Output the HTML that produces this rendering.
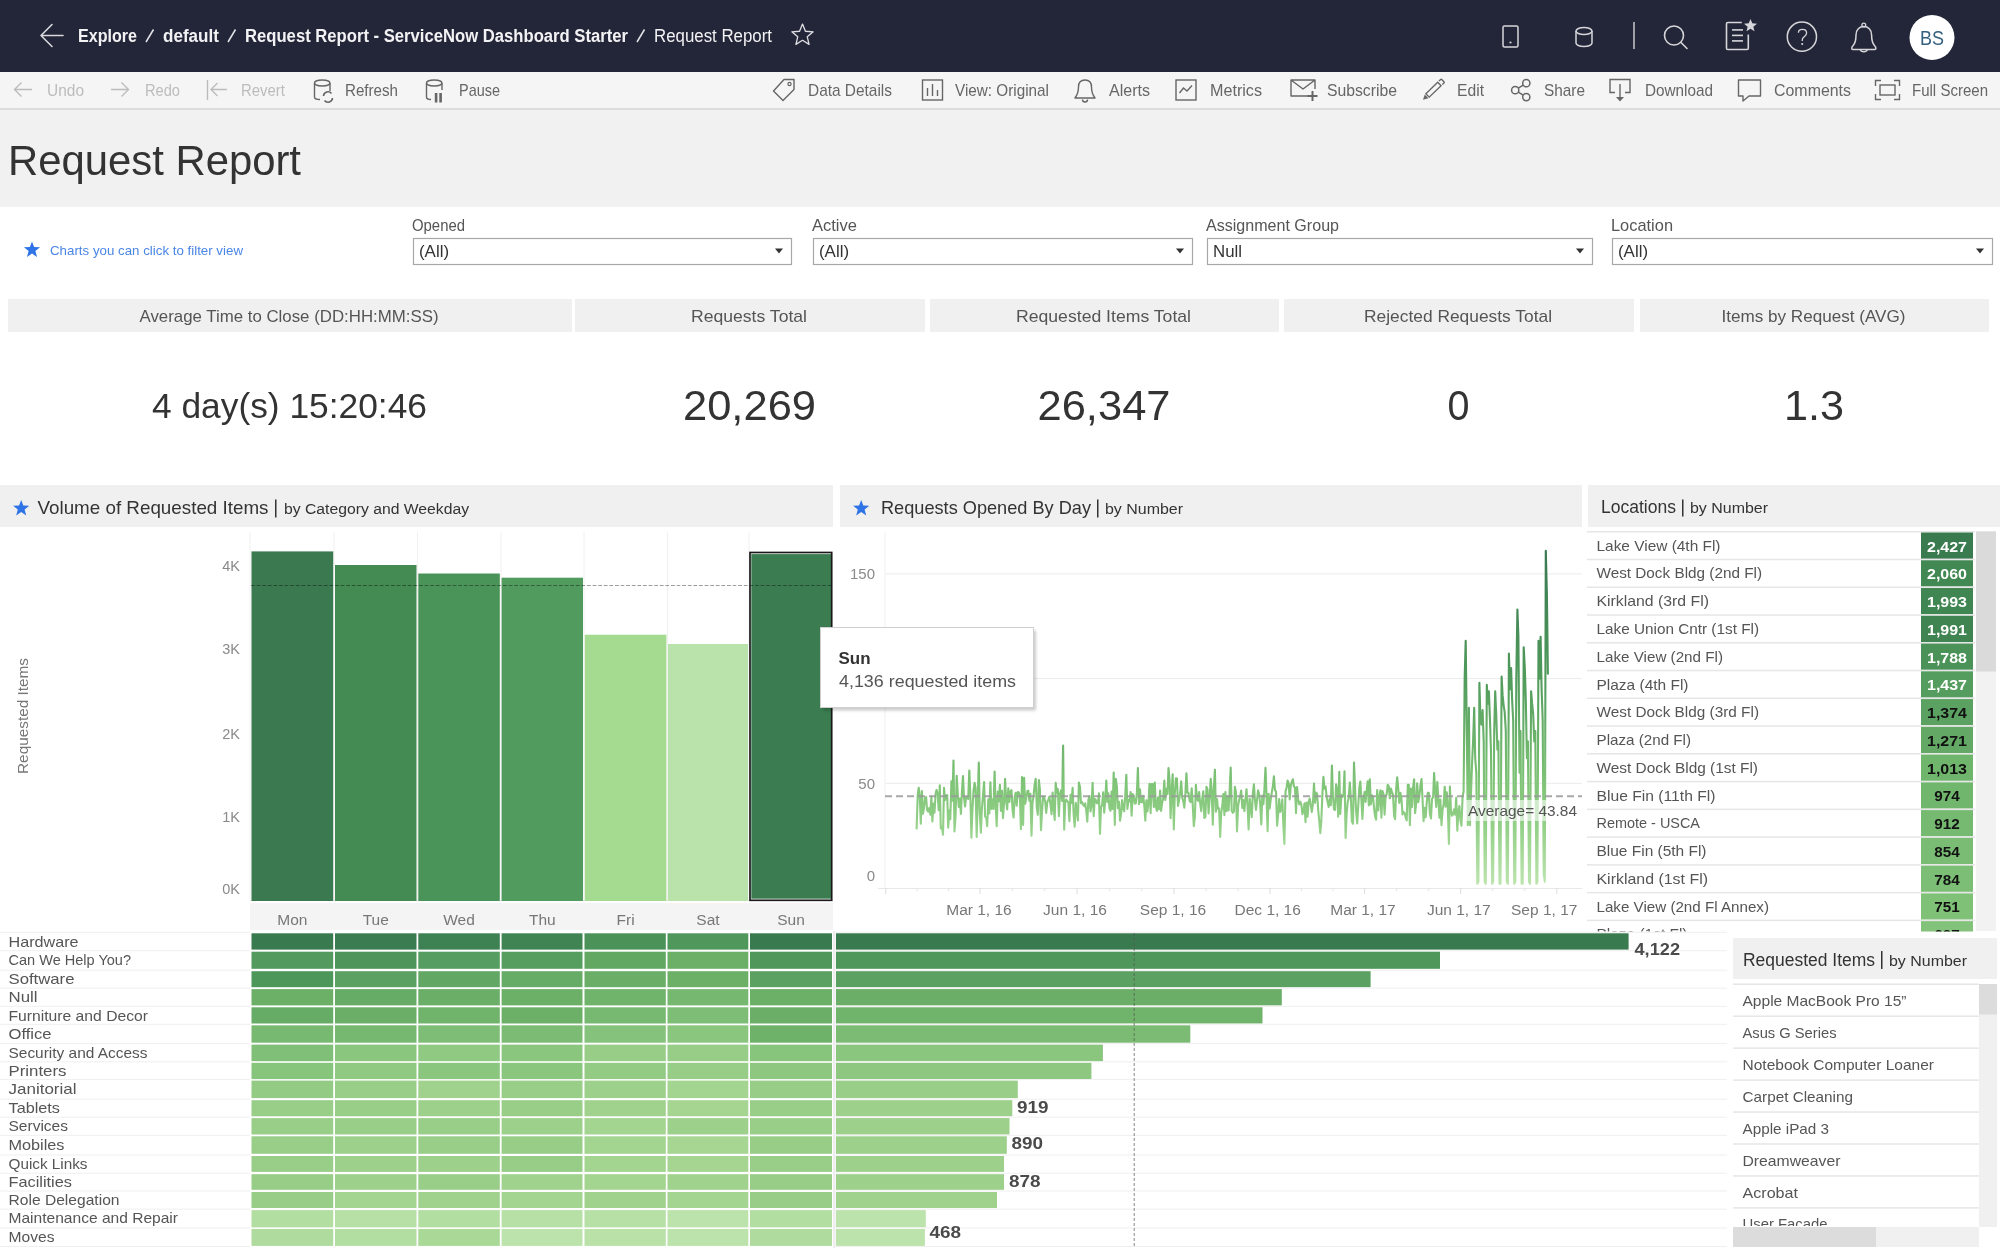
<!DOCTYPE html>
<html><head><meta charset="utf-8"><title>Request Report</title>
<style>
html,body{margin:0;padding:0;width:2000px;height:1250px;overflow:hidden;background:#fff}
svg{display:block;font-family:"Liberation Sans",sans-serif;will-change:transform}
</style></head><body>
<svg width="2000" height="1250" viewBox="0 0 2000 1250">
<rect x="0" y="0" width="2000" height="72" fill="#232638" />
<path d="M63 35.5 H41 M52 24.5 L41 35.5 L52 46.5" fill="none" stroke="#d8d8dc" stroke-width="1.6" stroke-linecap="round" stroke-linejoin="round"/>
<text x="78" y="42" font-size="18" fill="#f2f2f4" font-weight="bold" textLength="59" lengthAdjust="spacingAndGlyphs" >Explore</text>
<line x1="146" y1="42" x2="153.5" y2="29.5" stroke="#e4e4e8" stroke-width="1.5" />
<text x="163" y="42" font-size="18" fill="#f2f2f4" font-weight="bold" textLength="56" lengthAdjust="spacingAndGlyphs" >default</text>
<line x1="228" y1="42" x2="235.5" y2="29.5" stroke="#e4e4e8" stroke-width="1.5" />
<text x="245" y="42" font-size="18" fill="#f2f2f4" font-weight="bold" textLength="383" lengthAdjust="spacingAndGlyphs" >Request Report - ServiceNow Dashboard Starter</text>
<line x1="637" y1="42" x2="644.5" y2="29.5" stroke="#e4e4e8" stroke-width="1.5" />
<text x="654" y="42" font-size="18" fill="#f2f2f4" textLength="118" lengthAdjust="spacingAndGlyphs" >Request Report</text>
<path d="M802.50,24.10 L805.44,31.25 L813.15,31.84 L807.26,36.85 L809.08,44.36 L802.50,40.30 L795.92,44.36 L797.74,36.85 L791.85,31.84 L799.56,31.25 Z" fill="none" stroke="#e0e0e4" stroke-width="1.3" stroke-linejoin="round"/>
<rect x="1503" y="26" width="15" height="21" rx="1.5" fill="none" stroke="#d6d6da" stroke-width="1.5"/>
<circle cx="1510.5" cy="42.5" r="1.1" fill="#d6d6da"/>
<path d="M1576 31 V43 A8 3.6 0 0 0 1592 43 V31" fill="none" stroke="#d6d6da" stroke-width="1.5"/>
<ellipse cx="1584" cy="31" rx="8" ry="3.6" fill="none" stroke="#d6d6da" stroke-width="1.5"/>
<line x1="1634" y1="22" x2="1634" y2="49" stroke="#c8c8cc" stroke-width="1.5" />
<circle cx="1674" cy="35.5" r="9.5" fill="none" stroke="#d6d6da" stroke-width="1.6"/>
<line x1="1681" y1="42.5" x2="1687" y2="48.5" stroke="#d6d6da" stroke-width="1.6" stroke-linecap="round"/>
<path d="M1741.8 22.5 H1727.8 Q1726.5 22.5 1726.5 23.8 V48.2 Q1726.5 49.5 1727.8 49.5 H1747 Q1748.3 49.5 1748.3 48.2 V34.5" fill="none" stroke="#d6d6da" stroke-width="1.6"/>
<line x1="1732" y1="29.9" x2="1743" y2="29.9" stroke="#d6d6da" stroke-width="1.6" />
<line x1="1732" y1="35.4" x2="1743" y2="35.4" stroke="#d6d6da" stroke-width="1.6" />
<line x1="1732" y1="40.9" x2="1743" y2="40.9" stroke="#d6d6da" stroke-width="1.6" />
<path d="M1750.50,19.00 L1752.26,23.37 L1756.97,23.70 L1753.35,26.73 L1754.50,31.30 L1750.50,28.80 L1746.50,31.30 L1747.65,26.73 L1744.03,23.70 L1748.74,23.37 Z" fill="#d6d6da"/>
<circle cx="1801.9" cy="36.7" r="14.6" fill="none" stroke="#d6d6da" stroke-width="1.5"/>
<path d="M1798.4 32.8 C1798.4 30.6 1800 29.4 1802.4 29.4 C1804.9 29.4 1806.6 31 1806.6 33.1 C1806.6 35.5 1804.6 36.3 1803.3 37.5 C1802.4 38.3 1802.2 39.2 1802.2 41" fill="none" stroke="#d6d6da" stroke-width="1.3"/>
<circle cx="1802.2" cy="44" r="1.05" fill="#d6d6da"/>
<path d="M1851.7 48.3 Q1851.7 47 1853 45.7 C1855.6 43 1856 40 1856 35 C1856 29.6 1859.5 26.6 1863.8 26.6 C1868.1 26.6 1871.6 29.6 1871.6 35 C1871.6 40 1872 43 1874.6 45.7 Q1875.9 47 1875.9 48.3 Q1875.9 49.4 1874.8 49.4 H1852.8 Q1851.7 49.4 1851.7 48.3 Z" fill="none" stroke="#d6d6da" stroke-width="1.5" stroke-linejoin="round"/>
<circle cx="1863.8" cy="25" r="1.9" fill="none" stroke="#d6d6da" stroke-width="1.3"/>
<path d="M1860.3 49.6 A3.6 2.8 0 0 0 1867.3 49.6" fill="none" stroke="#d6d6da" stroke-width="1.5"/>
<circle cx="1932" cy="37.5" r="22.5" fill="#ffffff"/>
<text x="1920" y="45" font-size="21" fill="#34607f" textLength="24" lengthAdjust="spacingAndGlyphs" >BS</text>
<rect x="0" y="72" width="2000" height="36" fill="#f5f5f5" />
<rect x="0" y="108" width="2000" height="2" fill="#dcdcdc" />
<path d="M32 89.5 H14.5 M21.5 82.5 L14.5 89.5 L21.5 96.5" fill="none" stroke="#bcbcbc" stroke-width="1.4"/>
<text x="47" y="96" font-size="17" fill="#bcbcbc" textLength="37" lengthAdjust="spacingAndGlyphs" >Undo</text>
<path d="M111 89.5 H128.5 M121.5 82.5 L128.5 89.5 L121.5 96.5" fill="none" stroke="#bcbcbc" stroke-width="1.4"/>
<text x="145" y="96" font-size="17" fill="#bcbcbc" textLength="35" lengthAdjust="spacingAndGlyphs" >Redo</text>
<path d="M207.5 80 V100 M227 89.5 H211 M217.5 83 L211 89.5 L217.5 96" fill="none" stroke="#bcbcbc" stroke-width="1.4"/>
<text x="241" y="96" font-size="17" fill="#bcbcbc" textLength="44" lengthAdjust="spacingAndGlyphs" >Revert</text>
<path d="M314.5 83 V97 Q314.5 99.5 320 99.5 M330 83 V91" fill="none" stroke="#666666" stroke-width="1.4"/>
<ellipse cx="322.2" cy="83" rx="7.7" ry="3" fill="none" stroke="#666666" stroke-width="1.4"/>
<path d="M323.5 96 A4.5 4.5 0 0 1 331.5 93.5 M332.5 98 A4.5 4.5 0 0 1 324.5 100.5" fill="none" stroke="#666666" stroke-width="1.6"/>
<text x="345" y="96" font-size="17" fill="#666666" textLength="53" lengthAdjust="spacingAndGlyphs" >Refresh</text>
<path d="M426.5 83 V97 Q426.5 99.5 431 99.5 M442 83 V90" fill="none" stroke="#666666" stroke-width="1.4"/>
<ellipse cx="434.2" cy="83" rx="7.7" ry="3" fill="none" stroke="#666666" stroke-width="1.4"/>
<rect x="434.8" y="93" width="2.6" height="9.5" fill="#666666" />
<rect x="439.3" y="93" width="2.6" height="9.5" fill="#666666" />
<text x="459" y="96" font-size="17" fill="#666666" textLength="41" lengthAdjust="spacingAndGlyphs" >Pause</text>
<path d="M784 79.5 H794 V89.5 L783 100.5 L773.5 91 Z" fill="none" stroke="#666666" stroke-width="1.4" stroke-linejoin="round" transform="rotate(0)"/>
<circle cx="789.5" cy="84" r="1.6" fill="none" stroke="#666666" stroke-width="1.2"/>
<text x="808" y="96" font-size="17" fill="#666666" textLength="84" lengthAdjust="spacingAndGlyphs" >Data Details</text>
<rect x="922.5" y="80" width="20" height="20" fill="none" stroke="#666666" stroke-width="1.4"/>
<line x1="927.5" y1="88" x2="927.5" y2="96" stroke="#666666" stroke-width="1.4" />
<line x1="932.5" y1="84" x2="932.5" y2="96" stroke="#666666" stroke-width="1.4" />
<line x1="937.5" y1="90" x2="937.5" y2="96" stroke="#666666" stroke-width="1.4" />
<text x="955" y="96" font-size="17" fill="#666666" textLength="94" lengthAdjust="spacingAndGlyphs" >View: Original</text>
<path d="M1075 98 H1095 C1092 94 1091.5 91 1091.5 87 C1091.5 82 1088.5 80 1085 80 C1081.5 80 1078.5 82 1078.5 87 C1078.5 91 1078 94 1075 98 Z" fill="none" stroke="#666666" stroke-width="1.4" stroke-linejoin="round"/>
<path d="M1082.5 99.5 A2.5 2.5 0 0 0 1087.5 99.5" fill="none" stroke="#666666" stroke-width="1.4"/>
<text x="1109" y="96" font-size="17" fill="#666666" textLength="41" lengthAdjust="spacingAndGlyphs" >Alerts</text>
<rect x="1176" y="80" width="20" height="20" fill="none" stroke="#666666" stroke-width="1.4"/>
<path d="M1179.5 93 L1183.5 88 L1187 91 L1192 85.5" fill="none" stroke="#666666" stroke-width="1.4"/>
<text x="1210" y="96" font-size="17" fill="#666666" textLength="52" lengthAdjust="spacingAndGlyphs" >Metrics</text>
<path d="M1310 96 H1291 V80 H1315 V89 M1291 80 L1303 89 L1315 80" fill="none" stroke="#666666" stroke-width="1.4" stroke-linejoin="round"/>
<line x1="1312.5" y1="91" x2="1312.5" y2="101" stroke="#666666" stroke-width="2" />
<line x1="1307.5" y1="96" x2="1317.5" y2="96" stroke="#666666" stroke-width="2" />
<text x="1327" y="96" font-size="17" fill="#666666" textLength="70" lengthAdjust="spacingAndGlyphs" >Subscribe</text>
<g transform="translate(1423,99.8) rotate(-44)"><path d="M0 0 L5 -2.7 L5 2.7 Z" fill="#666666"/><rect x="6.3" y="-2.4" width="16.5" height="4.8" fill="none" stroke="#666666" stroke-width="1.35"/><path d="M24.6 -2.4 H26.8 Q27.6 -2.4 27.6 -1.6 V1.6 Q27.6 2.4 26.8 2.4 H24.6" fill="none" stroke="#666666" stroke-width="1.35"/></g>
<text x="1457" y="96" font-size="17" fill="#666666" textLength="27" lengthAdjust="spacingAndGlyphs" >Edit</text>
<circle cx="1515.2" cy="90.2" r="3.6" fill="none" stroke="#666666" stroke-width="1.5"/>
<circle cx="1526.3" cy="83.2" r="3.6" fill="none" stroke="#666666" stroke-width="1.5"/>
<circle cx="1526.3" cy="97.1" r="3.6" fill="none" stroke="#666666" stroke-width="1.5"/>
<path d="M1518.3 88.2 L1523.2 85.1 M1518.3 92.2 L1523.2 95.2" fill="none" stroke="#666666" stroke-width="1.5"/>
<text x="1544" y="96" font-size="17" fill="#666666" textLength="41" lengthAdjust="spacingAndGlyphs" >Share</text>
<path d="M1615 92.5 H1610 V79.5 H1630 V92.5 H1625" fill="none" stroke="#666666" stroke-width="1.4"/>
<line x1="1620" y1="84" x2="1620" y2="98" stroke="#666666" stroke-width="1.4" />
<path d="M1616 97 L1620 101.5 L1624 97 Z" fill="#666666"/>
<text x="1645" y="96" font-size="17" fill="#666666" textLength="68" lengthAdjust="spacingAndGlyphs" >Download</text>
<path d="M1738.5 80 H1760.5 V96 H1749 L1743 101 V96 H1738.5 Z" fill="none" stroke="#666666" stroke-width="1.4" stroke-linejoin="round"/>
<text x="1774" y="96" font-size="17" fill="#666666" textLength="77" lengthAdjust="spacingAndGlyphs" >Comments</text>
<path d="M1875.5 86 V80.5 H1881 M1894 80.5 H1899.5 V86 M1899.5 94 V99.5 H1894 M1881 99.5 H1875.5 V94" fill="none" stroke="#666666" stroke-width="1.4"/>
<rect x="1880" y="85" width="15" height="10" fill="none" stroke="#666666" stroke-width="1.4"/>
<text x="1912" y="96" font-size="17" fill="#666666" textLength="76" lengthAdjust="spacingAndGlyphs" >Full Screen</text>
<rect x="0" y="110" width="2000" height="97" fill="#f1f1f1" />
<text x="8" y="175.3" font-size="42" fill="#333333" textLength="293" lengthAdjust="spacingAndGlyphs" >Request Report</text>
<rect x="0" y="207" width="2000" height="1043" fill="#ffffff" />
<path d="M32.00,241.50 L34.12,247.09 L40.08,247.37 L35.42,251.11 L37.00,256.88 L32.00,253.60 L27.00,256.88 L28.58,251.11 L23.92,247.37 L29.88,247.09 Z" fill="#2e74e6"/>
<text x="50" y="255.2" font-size="13.5" fill="#4a86e6" textLength="193" lengthAdjust="spacingAndGlyphs" >Charts you can click to filter view</text>
<text x="412" y="231" font-size="16.2" fill="#555555" textLength="53" lengthAdjust="spacingAndGlyphs" >Opened</text>
<rect x="413.5" y="238.5" width="378" height="26" fill="#ffffff" stroke="#a8a8a8" stroke-width="1.2"/>
<text x="419" y="257" font-size="16" fill="#333333" textLength="30" lengthAdjust="spacingAndGlyphs" >(All)</text>
<path d="M775 248.5 H783 L779 253.5 Z" fill="#333333"/>
<text x="812" y="231" font-size="16.2" fill="#555555" textLength="45" lengthAdjust="spacingAndGlyphs" >Active</text>
<rect x="813.5" y="238.5" width="379" height="26" fill="#ffffff" stroke="#a8a8a8" stroke-width="1.2"/>
<text x="819" y="257" font-size="16" fill="#333333" textLength="30" lengthAdjust="spacingAndGlyphs" >(All)</text>
<path d="M1176 248.5 H1184 L1180 253.5 Z" fill="#333333"/>
<text x="1206" y="231" font-size="16.2" fill="#555555" textLength="133" lengthAdjust="spacingAndGlyphs" >Assignment Group</text>
<rect x="1207.5" y="238.5" width="385" height="26" fill="#ffffff" stroke="#a8a8a8" stroke-width="1.2"/>
<text x="1213" y="257" font-size="16" fill="#333333" textLength="29" lengthAdjust="spacingAndGlyphs" >Null</text>
<path d="M1576 248.5 H1584 L1580 253.5 Z" fill="#333333"/>
<text x="1611" y="231" font-size="16.2" fill="#555555" textLength="62" lengthAdjust="spacingAndGlyphs" >Location</text>
<rect x="1612.5" y="238.5" width="380" height="26" fill="#ffffff" stroke="#a8a8a8" stroke-width="1.2"/>
<text x="1618" y="257" font-size="16" fill="#333333" textLength="30" lengthAdjust="spacingAndGlyphs" >(All)</text>
<path d="M1976 248.5 H1984 L1980 253.5 Z" fill="#333333"/>
<rect x="8" y="299" width="564" height="33" fill="#f0f0f0" />
<text x="139.5" y="322" font-size="17" fill="#555555" textLength="299" lengthAdjust="spacingAndGlyphs" >Average Time to Close (DD:HH:MM:SS)</text>
<text x="152" y="418.2" font-size="34.5" fill="#333333" textLength="275" lengthAdjust="spacingAndGlyphs" >4 day(s) 15:20:46</text>
<rect x="575" y="299" width="350" height="33" fill="#f0f0f0" />
<text x="691.0" y="322" font-size="17" fill="#555555" textLength="116" lengthAdjust="spacingAndGlyphs" >Requests Total</text>
<text x="683.0" y="420" font-size="42.5" fill="#333333" textLength="133" lengthAdjust="spacingAndGlyphs" >20,269</text>
<rect x="930" y="299" width="349" height="33" fill="#f0f0f0" />
<text x="1016.0" y="322" font-size="17" fill="#555555" textLength="175" lengthAdjust="spacingAndGlyphs" >Requested Items Total</text>
<text x="1037.5" y="420" font-size="42.5" fill="#333333" textLength="133" lengthAdjust="spacingAndGlyphs" >26,347</text>
<rect x="1284" y="299" width="350" height="33" fill="#f0f0f0" />
<text x="1364.0" y="322" font-size="17" fill="#555555" textLength="188" lengthAdjust="spacingAndGlyphs" >Rejected Requests Total</text>
<text x="1447.5" y="420" font-size="42.5" fill="#333333" textLength="22" lengthAdjust="spacingAndGlyphs" >0</text>
<rect x="1640" y="299" width="349" height="33" fill="#f0f0f0" />
<text x="1721.5" y="322" font-size="17" fill="#555555" textLength="184" lengthAdjust="spacingAndGlyphs" >Items by Request (AVG)</text>
<text x="1784.0" y="420" font-size="42.5" fill="#333333" textLength="60" lengthAdjust="spacingAndGlyphs" >1.3</text>
<rect x="0" y="485" width="833" height="42" fill="#f0f0f0" />
<rect x="840" y="485" width="742" height="42" fill="#f0f0f0" />
<rect x="1588" y="485" width="412" height="42" fill="#f0f0f0" />
<path d="M21.20,500.00 L23.32,505.59 L29.28,505.87 L24.62,509.61 L26.20,515.38 L21.20,512.10 L16.20,515.38 L17.78,509.61 L13.12,505.87 L19.08,505.59 Z" fill="#2e74e6"/>
<text x="37.5" y="514" font-size="18.5" fill="#333333" textLength="231" lengthAdjust="spacingAndGlyphs" >Volume of Requested Items</text>
<rect x="275" y="499.5" width="1.5" height="18" fill="#333333" />
<text x="284" y="514" font-size="15.5" fill="#333333" textLength="185" lengthAdjust="spacingAndGlyphs" >by Category and Weekday</text>
<path d="M861.20,500.00 L863.32,505.59 L869.28,505.87 L864.62,509.61 L866.20,515.38 L861.20,512.10 L856.20,515.38 L857.78,509.61 L853.12,505.87 L859.08,505.59 Z" fill="#2e74e6"/>
<text x="881" y="514" font-size="18.5" fill="#333333" textLength="210" lengthAdjust="spacingAndGlyphs" >Requests Opened By Day</text>
<rect x="1097" y="499.5" width="1.5" height="18" fill="#333333" />
<text x="1105" y="514" font-size="15.5" fill="#333333" textLength="78" lengthAdjust="spacingAndGlyphs" >by Number</text>
<text x="1601" y="513" font-size="17.5" fill="#333333" textLength="75" lengthAdjust="spacingAndGlyphs" >Locations</text>
<rect x="1682" y="499.5" width="1.5" height="17" fill="#333333" />
<text x="1690" y="513" font-size="15.5" fill="#333333" textLength="78" lengthAdjust="spacingAndGlyphs" >by Number</text>
<line x1="250" y1="532" x2="250" y2="900" stroke="#f0f0f0" stroke-width="1" />
<line x1="334" y1="532" x2="334" y2="900" stroke="#f0f0f0" stroke-width="1" />
<line x1="417.5" y1="532" x2="417.5" y2="900" stroke="#f0f0f0" stroke-width="1" />
<line x1="501" y1="532" x2="501" y2="900" stroke="#f0f0f0" stroke-width="1" />
<line x1="584" y1="532" x2="584" y2="900" stroke="#f0f0f0" stroke-width="1" />
<line x1="667.5" y1="532" x2="667.5" y2="900" stroke="#f0f0f0" stroke-width="1" />
<line x1="749" y1="532" x2="749" y2="900" stroke="#f0f0f0" stroke-width="1" />
<rect x="250" y="900" width="583" height="1" fill="#e8e8e8" />
<rect x="251.5" y="551.4" width="81.69999999999999" height="349.6" fill="#3b7a50" />
<rect x="335" y="565" width="81.5" height="336" fill="#438a53" />
<rect x="418.3" y="573.5" width="81.5" height="327.5" fill="#4b9459" />
<rect x="501.6" y="577.7" width="81.39999999999998" height="323.29999999999995" fill="#529b5e" />
<rect x="584.8" y="634.7" width="81.60000000000002" height="266.29999999999995" fill="#a5da91" />
<rect x="668" y="644" width="80" height="257" fill="#b9e3aa" />
<rect x="751.3" y="554.1" width="79.9" height="344.59999999999997" fill="#3b7d50" />
<rect x="750" y="552.5" width="81.7" height="347.8" fill="none" stroke="#1a1a1a" stroke-width="1.7"/>
<line x1="251" y1="585.5" x2="833" y2="585.5" stroke="#000000" stroke-width="1.1" stroke-dasharray="3.8 1.8" opacity="0.38"/>
<text x="240" y="570.5" font-size="14.5" fill="#8a8a8a" text-anchor="end" >4K</text>
<text x="240" y="654" font-size="14.5" fill="#8a8a8a" text-anchor="end" >3K</text>
<text x="240" y="738.5" font-size="14.5" fill="#8a8a8a" text-anchor="end" >2K</text>
<text x="240" y="822" font-size="14.5" fill="#8a8a8a" text-anchor="end" >1K</text>
<text x="240" y="894" font-size="14.5" fill="#8a8a8a" text-anchor="end" >0K</text>
<text x="0" y="0" font-size="15" fill="#777777" transform="translate(28,716) rotate(-90)" text-anchor="middle" textLength="116" lengthAdjust="spacingAndGlyphs">Requested Items</text>
<rect x="250" y="903" width="583" height="27" fill="#f4f4f4" />
<text x="292.35" y="925" font-size="15.5" fill="#777777" text-anchor="middle" >Mon</text>
<text x="375.75" y="925" font-size="15.5" fill="#777777" text-anchor="middle" >Tue</text>
<text x="459.05" y="925" font-size="15.5" fill="#777777" text-anchor="middle" >Wed</text>
<text x="542.3" y="925" font-size="15.5" fill="#777777" text-anchor="middle" >Thu</text>
<text x="625.5999999999999" y="925" font-size="15.5" fill="#777777" text-anchor="middle" >Fri</text>
<text x="708.0" y="925" font-size="15.5" fill="#777777" text-anchor="middle" >Sat</text>
<text x="791.0" y="925" font-size="15.5" fill="#777777" text-anchor="middle" >Sun</text>
<line x1="885" y1="573.9000000000001" x2="1582" y2="573.9000000000001" stroke="#ececec" stroke-width="1" />
<line x1="885" y1="678.6" x2="1582" y2="678.6" stroke="#ececec" stroke-width="1" />
<line x1="885" y1="783.3" x2="1582" y2="783.3" stroke="#ececec" stroke-width="1" />
<line x1="885" y1="532" x2="885" y2="888" stroke="#f0f0f0" stroke-width="1" />
<line x1="878" y1="888.5" x2="1582" y2="888.5" stroke="#e8e8e8" stroke-width="1" />
<text x="875" y="579.4000000000001" font-size="15" fill="#8a8a8a" text-anchor="end" >150</text>
<text x="875" y="788.8" font-size="15" fill="#8a8a8a" text-anchor="end" >50</text>
<text x="875" y="880.5" font-size="15" fill="#8a8a8a" text-anchor="end" >0</text>
<line x1="885.8" y1="888" x2="885.8" y2="894" stroke="#dddddd" stroke-width="1" />
<line x1="980" y1="888" x2="980" y2="894" stroke="#dddddd" stroke-width="1" />
<line x1="1077" y1="888" x2="1077" y2="894" stroke="#dddddd" stroke-width="1" />
<line x1="1174" y1="888" x2="1174" y2="894" stroke="#dddddd" stroke-width="1" />
<line x1="1270" y1="888" x2="1270" y2="894" stroke="#dddddd" stroke-width="1" />
<line x1="1364.6" y1="888" x2="1364.6" y2="894" stroke="#dddddd" stroke-width="1" />
<line x1="1460.7" y1="888" x2="1460.7" y2="894" stroke="#dddddd" stroke-width="1" />
<line x1="1556.8" y1="888" x2="1556.8" y2="894" stroke="#dddddd" stroke-width="1" />
<line x1="917.1999999999999" y1="888" x2="917.1999999999999" y2="891" stroke="#e6e6e6" stroke-width="1" />
<line x1="948.6" y1="888" x2="948.6" y2="891" stroke="#e6e6e6" stroke-width="1" />
<line x1="1012.3333333333334" y1="888" x2="1012.3333333333334" y2="891" stroke="#e6e6e6" stroke-width="1" />
<line x1="1044.6666666666667" y1="888" x2="1044.6666666666667" y2="891" stroke="#e6e6e6" stroke-width="1" />
<line x1="1109.3333333333333" y1="888" x2="1109.3333333333333" y2="891" stroke="#e6e6e6" stroke-width="1" />
<line x1="1141.6666666666667" y1="888" x2="1141.6666666666667" y2="891" stroke="#e6e6e6" stroke-width="1" />
<line x1="1206.0" y1="888" x2="1206.0" y2="891" stroke="#e6e6e6" stroke-width="1" />
<line x1="1238.0" y1="888" x2="1238.0" y2="891" stroke="#e6e6e6" stroke-width="1" />
<line x1="1301.5333333333333" y1="888" x2="1301.5333333333333" y2="891" stroke="#e6e6e6" stroke-width="1" />
<line x1="1333.0666666666666" y1="888" x2="1333.0666666666666" y2="891" stroke="#e6e6e6" stroke-width="1" />
<line x1="1396.6333333333332" y1="888" x2="1396.6333333333332" y2="891" stroke="#e6e6e6" stroke-width="1" />
<line x1="1428.6666666666667" y1="888" x2="1428.6666666666667" y2="891" stroke="#e6e6e6" stroke-width="1" />
<line x1="1492.7333333333333" y1="888" x2="1492.7333333333333" y2="891" stroke="#e6e6e6" stroke-width="1" />
<line x1="1524.7666666666667" y1="888" x2="1524.7666666666667" y2="891" stroke="#e6e6e6" stroke-width="1" />
<text x="979" y="914.6" font-size="15.5" fill="#777777" text-anchor="middle" >Mar 1, 16</text>
<text x="1075" y="914.6" font-size="15.5" fill="#777777" text-anchor="middle" >Jun 1, 16</text>
<text x="1173" y="914.6" font-size="15.5" fill="#777777" text-anchor="middle" >Sep 1, 16</text>
<text x="1267.7" y="914.6" font-size="15.5" fill="#777777" text-anchor="middle" >Dec 1, 16</text>
<text x="1363" y="914.6" font-size="15.5" fill="#777777" text-anchor="middle" >Mar 1, 17</text>
<text x="1458.8" y="914.6" font-size="15.5" fill="#777777" text-anchor="middle" >Jun 1, 17</text>
<text x="1544.2" y="914.6" font-size="15.5" fill="#777777" text-anchor="middle" >Sep 1, 17</text>
<defs><linearGradient id="lg" gradientUnits="userSpaceOnUse" x1="0" y1="888" x2="0" y2="540"><stop offset="0" stop-color="#bfe5b0"/><stop offset="0.18" stop-color="#93d088"/><stop offset="0.30" stop-color="#7fc477"/><stop offset="0.6" stop-color="#519b5c"/><stop offset="1" stop-color="#377650"/></linearGradient></defs>
<polyline points="916.6,829.4 917.7,795.5 918.7,787.7 919.8,796.6 920.8,823.8 921.9,791.0 922.9,813.7 924.0,808.2 925.0,798.1 926.1,797.0 927.1,810.2 928.2,811.7 929.2,808.0 930.3,814.6 931.4,796.6 932.4,821.5 933.5,803.5 934.5,812.8 935.6,793.5 936.6,789.9 937.7,794.2 938.7,810.1 939.8,785.4 940.8,828.5 941.9,826.8 943.0,834.8 944.0,787.8 945.1,800.1 946.1,795.4 947.2,795.0 948.2,827.8 949.3,810.4 950.3,819.2 951.4,781.2 952.4,800.6 953.5,760.5 954.5,831.5 955.6,815.1 956.7,775.9 957.7,792.9 958.8,807.0 959.8,798.5 960.9,814.0 961.9,792.1 963.0,776.0 964.0,797.9 965.1,806.5 966.1,797.1 967.2,797.0 968.2,799.0 969.3,770.6 970.4,797.5 971.4,837.6 972.5,808.5 973.5,791.0 974.6,782.8 975.6,788.0 976.7,837.0 977.7,799.9 978.8,762.5 979.8,813.6 980.9,832.6 981.9,808.2 983.0,795.3 984.1,782.0 985.1,816.7 986.2,817.3 987.2,826.2 988.3,799.3 989.3,813.5 990.4,782.4 991.4,809.0 992.5,799.6 993.5,809.0 994.6,771.6 995.6,804.2 996.7,826.2 997.8,791.5 998.8,801.1 999.9,784.9 1000.9,810.9 1002.0,790.7 1003.0,818.1 1004.1,802.3 1005.1,778.9 1006.2,801.6 1007.2,809.4 1008.3,788.2 1009.4,802.0 1010.4,791.7 1011.5,790.2 1012.5,809.5 1013.6,817.5 1014.6,797.4 1015.7,792.7 1016.7,805.7 1017.8,792.0 1018.8,792.4 1019.9,796.3 1020.9,829.2 1022.0,777.0 1023.1,825.0 1024.1,777.7 1025.2,803.7 1026.2,798.3 1027.3,791.4 1028.3,790.6 1029.4,800.8 1030.4,793.9 1031.5,835.8 1032.5,803.0 1033.6,795.4 1034.6,784.9 1035.7,778.7 1036.8,807.3 1037.8,814.8 1038.9,780.0 1039.9,789.3 1041.0,830.2 1042.0,811.9 1043.1,796.2 1044.1,797.3 1045.2,801.5 1046.2,812.9 1047.3,802.2 1048.3,799.9 1049.4,796.5 1050.5,804.6 1051.5,814.2 1052.6,792.5 1053.6,807.1 1054.7,819.9 1055.7,782.9 1056.8,793.0 1057.8,788.9 1058.9,816.2 1059.9,794.4 1061.0,790.4 1062.1,801.0 1063.1,745.6 1064.2,829.8 1065.2,802.3 1066.3,799.5 1067.3,801.4 1068.4,802.1 1069.4,821.2 1070.5,794.8 1071.5,802.9 1072.6,787.9 1073.6,813.6 1074.7,826.8 1075.8,802.8 1076.8,810.3 1077.9,820.4 1078.9,782.6 1080.0,787.0 1081.0,803.2 1082.1,802.1 1083.1,804.7 1084.2,806.2 1085.2,803.3 1086.3,810.9 1087.3,821.7 1088.4,799.6 1089.5,796.2 1090.5,811.5 1091.6,804.4 1092.6,782.9 1093.7,816.3 1094.7,798.9 1095.8,799.9 1096.8,803.1 1097.9,803.2 1098.9,793.3 1100.0,833.9 1101.0,807.0 1102.1,804.9 1103.2,792.2 1104.2,812.6 1105.3,798.8 1106.3,780.5 1107.4,801.9 1108.4,793.4 1109.5,808.4 1110.5,810.9 1111.6,791.6 1112.6,808.9 1113.7,772.5 1114.8,824.9 1115.8,778.9 1116.9,786.9 1117.9,808.1 1119.0,801.8 1120.0,820.8 1121.1,813.9 1122.1,800.1 1123.2,808.3 1124.2,811.3 1125.3,794.8 1126.3,774.9 1127.4,808.9 1128.5,799.9 1129.5,801.5 1130.6,792.1 1131.6,815.7 1132.7,794.0 1133.7,795.6 1134.8,803.5 1135.8,803.4 1136.9,792.4 1137.9,768.0 1139.0,804.1 1140.0,789.2 1141.1,802.1 1142.2,802.1 1143.2,795.9 1144.3,805.5 1145.3,820.6 1146.4,800.2 1147.4,811.4 1148.5,802.4 1149.5,783.7 1150.6,813.3 1151.6,784.0 1152.7,784.1 1153.8,806.9 1154.8,782.5 1155.9,807.1 1156.9,810.9 1158.0,797.3 1159.0,809.3 1160.1,790.6 1161.1,810.9 1162.2,802.4 1163.2,798.2 1164.3,780.5 1165.3,799.9 1166.4,788.8 1167.5,794.0 1168.5,768.0 1169.6,780.5 1170.6,818.2 1171.7,790.2 1172.7,774.2 1173.8,829.4 1174.8,793.8 1175.9,778.3 1176.9,778.6 1178.0,805.9 1179.0,800.4 1180.1,793.8 1181.2,781.3 1182.2,797.6 1183.3,801.1 1184.3,807.6 1185.4,793.4 1186.4,773.3 1187.5,792.6 1188.5,792.8 1189.6,800.7 1190.6,802.2 1191.7,788.4 1192.7,803.9 1193.8,826.2 1194.9,816.8 1195.9,784.8 1197.0,799.0 1198.0,800.8 1199.1,792.0 1200.1,802.9 1201.2,811.1 1202.2,799.0 1203.3,791.2 1204.3,817.9 1205.4,817.0 1206.5,786.9 1207.5,789.4 1208.6,813.5 1209.6,799.4 1210.7,778.7 1211.7,791.7 1212.8,824.7 1213.8,789.2 1214.9,769.7 1215.9,811.7 1217.0,799.0 1218.0,808.8 1219.1,808.4 1220.2,836.9 1221.2,813.2 1222.3,805.5 1223.3,794.1 1224.4,815.1 1225.4,792.1 1226.5,811.1 1227.5,796.5 1228.6,810.5 1229.6,791.6 1230.7,767.5 1231.7,810.8 1232.8,812.8 1233.9,811.8 1234.9,786.8 1236.0,792.5 1237.0,831.5 1238.1,806.1 1239.1,800.0 1240.2,795.8 1241.2,790.6 1242.3,807.9 1243.3,800.1 1244.4,811.1 1245.4,799.5 1246.5,789.3 1247.6,806.5 1248.6,829.5 1249.7,798.7 1250.7,807.7 1251.8,817.2 1252.8,793.9 1253.9,784.3 1254.9,799.5 1256.0,810.0 1257.0,800.0 1258.1,790.4 1259.2,794.5 1260.2,804.5 1261.3,824.5 1262.3,795.5 1263.4,804.3 1264.4,789.4 1265.5,767.7 1266.5,795.0 1267.6,831.3 1268.6,793.9 1269.7,808.4 1270.7,799.5 1271.8,792.4 1272.9,786.0 1273.9,776.3 1275.0,790.2 1276.0,791.6 1277.1,825.7 1278.1,815.1 1279.2,799.1 1280.2,811.9 1281.3,809.7 1282.3,799.3 1283.4,826.1 1284.4,844.0 1285.5,791.5 1286.6,787.7 1287.6,780.6 1288.7,783.4 1289.7,799.4 1290.8,785.2 1291.8,781.9 1292.9,779.3 1293.9,786.5 1295.0,787.5 1296.0,813.2 1297.1,787.0 1298.1,798.9 1299.2,804.4 1300.3,801.8 1301.3,804.2 1302.4,814.2 1303.4,811.8 1304.5,803.4 1305.5,822.1 1306.6,802.6 1307.6,816.7 1308.7,801.7 1309.7,798.5 1310.8,804.6 1311.8,812.1 1312.9,803.9 1314.0,783.6 1315.0,802.8 1316.1,792.6 1317.1,793.7 1318.2,810.1 1319.2,820.5 1320.3,833.2 1321.3,821.4 1322.4,794.1 1323.4,776.9 1324.5,788.7 1325.6,786.5 1326.6,796.2 1327.7,802.5 1328.7,806.9 1329.8,798.4 1330.8,805.2 1331.9,765.6 1332.9,796.1 1334.0,809.4 1335.0,810.0 1336.1,784.2 1337.1,789.8 1338.2,816.6 1339.3,771.9 1340.3,814.0 1341.4,794.9 1342.4,796.8 1343.5,795.3 1344.5,771.3 1345.6,837.9 1346.6,814.1 1347.7,801.7 1348.7,797.7 1349.8,782.5 1350.8,797.4 1351.9,821.6 1353.0,823.7 1354.0,762.6 1355.1,789.7 1356.1,811.1 1357.2,823.5 1358.2,806.4 1359.3,788.1 1360.3,781.5 1361.4,799.6 1362.4,819.0 1363.5,798.2 1364.6,791.9 1365.6,802.0 1366.7,790.6 1367.7,781.4 1368.8,805.4 1369.8,779.2 1370.9,804.5 1371.9,795.2 1373.0,796.7 1374.0,807.5 1375.1,816.5 1376.1,819.8 1377.2,790.1 1378.3,810.4 1379.3,797.7 1380.4,790.4 1381.4,817.8 1382.5,791.1 1383.5,794.3 1384.6,814.8 1385.6,795.5 1386.7,794.4 1387.7,784.9 1388.8,786.4 1389.8,798.3 1390.9,788.5 1392.0,792.1 1393.0,794.6 1394.1,816.0 1395.1,819.3 1396.2,788.4 1397.2,777.4 1398.3,789.2 1399.3,803.0 1400.4,792.9 1401.4,798.0 1402.5,814.4 1403.5,811.9 1404.6,813.1 1405.7,817.6 1406.7,820.5 1407.8,784.8 1408.8,784.7 1409.9,825.2 1410.9,788.5 1412.0,806.9 1413.0,788.1 1414.1,779.2 1415.1,813.2 1416.2,803.4 1417.2,783.2 1418.3,802.1 1419.4,796.1 1420.4,786.0 1421.5,779.1 1422.5,798.4 1423.6,821.1 1424.6,807.8 1425.7,817.1 1426.7,803.0 1427.8,792.7 1428.8,792.9 1429.9,814.0 1431.0,818.5 1432.0,798.8 1433.1,797.2 1434.1,773.1 1435.2,791.6 1436.2,807.0 1437.3,782.0 1438.3,797.8 1439.4,817.8 1440.4,799.6 1441.5,825.1 1442.5,810.2 1443.6,804.2 1444.7,786.9 1445.7,806.6 1446.8,792.2 1447.8,806.8 1448.9,844.0 1449.9,786.5 1451.0,810.6 1452.0,815.7 1453.1,814.3 1454.1,809.3 1455.2,814.6 1456.2,797.7 1457.3,830.6 1458.4,811.4 1459.4,806.0 1460.5,821.2 1461.5,825.7 1462.6,795.9 1463.6,791.8 1464.7,676.5 1465.7,640.9 1466.8,731.0 1467.8,825.2 1468.9,707.9 1470.0,825.2 1471.0,793.8 1472.1,762.4 1473.1,741.4 1474.2,707.9 1475.2,758.2 1476.3,772.8 1477.3,883.8 1478.4,881.7 1479.4,682.8 1480.5,720.5 1481.5,724.7 1482.6,710.0 1483.7,741.4 1484.7,881.7 1485.8,883.8 1486.8,684.9 1487.9,703.7 1488.9,691.2 1490.0,720.5 1491.0,751.9 1492.1,883.8 1493.1,881.7 1494.2,731.0 1495.2,691.2 1496.3,716.3 1497.4,749.8 1498.4,741.4 1499.5,883.8 1500.5,883.8 1501.6,676.5 1502.6,695.4 1503.7,705.8 1504.7,712.1 1505.8,731.0 1506.8,881.7 1507.9,883.8 1508.9,653.5 1510.0,689.1 1511.1,668.1 1512.1,699.5 1513.2,720.5 1514.2,883.8 1515.3,881.7 1516.3,678.6 1517.4,609.5 1518.4,636.7 1519.5,772.8 1520.5,731.0 1521.6,883.8 1522.7,883.8 1523.7,647.2 1524.8,668.1 1525.8,699.5 1526.9,758.2 1527.9,741.4 1529.0,881.7 1530.0,883.8 1531.1,691.2 1532.1,703.7 1533.2,714.2 1534.2,741.4 1535.3,731.0 1536.4,883.8 1537.4,881.7 1538.5,640.9 1539.5,678.6 1540.6,636.7 1541.6,689.1 1542.7,720.5 1543.7,873.3 1544.8,881.7 1545.8,550.9 1546.9,594.8 1547.9,674.4" fill="none" stroke="url(#lg)" stroke-width="2.1" stroke-linejoin="round"/>
<line x1="885" y1="796.19904" x2="1582" y2="796.19904" stroke="#9a9a9a" stroke-width="2" stroke-dasharray="7 4" opacity="0.85"/>
<rect x="1466" y="800" width="112" height="21" fill="#ffffff" opacity="0.6"/>
<text x="1468" y="816" font-size="15" fill="#555555" textLength="109" lengthAdjust="spacingAndGlyphs" >Average= 43.84</text>
<defs><filter id="tsh" x="-10%" y="-10%" width="130%" height="140%"><feGaussianBlur stdDeviation="1.6"/></filter></defs>
<rect x="823" y="630.5" width="213" height="80" fill="#000" opacity="0.2" filter="url(#tsh)"/>
<rect x="820.5" y="627.5" width="213" height="80" fill="#ffffff" stroke="#cfcfcf" stroke-width="1"/>
<text x="838.5" y="664.3" font-size="17" fill="#333333" font-weight="bold" textLength="32" lengthAdjust="spacingAndGlyphs" >Sun</text>
<text x="839" y="687" font-size="16.5" fill="#555555" textLength="177" lengthAdjust="spacingAndGlyphs" >4,136 requested items</text>
<defs><clipPath id="locclip"><rect x="1587" y="527" width="413" height="404.5"/></clipPath></defs>
<g clip-path="url(#locclip)">
<rect x="1587" y="531.0" width="388" height="1.5" fill="#e6e6e6" />
<rect x="1921" y="532.5" width="52" height="26.26" fill="#3a7a4f" />
<text x="1596.5" y="550.7" font-size="15" fill="#555555" textLength="124" lengthAdjust="spacingAndGlyphs" >Lake View (4th Fl)</text>
<text x="1927.0" y="551.5" font-size="15" fill="#ffffff" font-weight="bold" textLength="40" lengthAdjust="spacingAndGlyphs" >2,427</text>
<rect x="1587" y="558.76" width="388" height="1.5" fill="#e6e6e6" />
<rect x="1921" y="560.26" width="52" height="26.26" fill="#418852" />
<text x="1596.5" y="578.46" font-size="15" fill="#555555" textLength="165.5" lengthAdjust="spacingAndGlyphs" >West Dock Bldg (2nd Fl)</text>
<text x="1927.0" y="579.26" font-size="15" fill="#ffffff" font-weight="bold" textLength="40" lengthAdjust="spacingAndGlyphs" >2,060</text>
<rect x="1587" y="586.52" width="388" height="1.5" fill="#e6e6e6" />
<rect x="1921" y="588.02" width="52" height="26.26" fill="#408652" />
<text x="1596.5" y="606.22" font-size="15" fill="#555555" textLength="112.5" lengthAdjust="spacingAndGlyphs" >Kirkland (3rd Fl)</text>
<text x="1927.0" y="607.02" font-size="15" fill="#ffffff" font-weight="bold" textLength="40" lengthAdjust="spacingAndGlyphs" >1,993</text>
<rect x="1587" y="614.28" width="388" height="1.5" fill="#e6e6e6" />
<rect x="1921" y="615.78" width="52" height="26.26" fill="#3f8451" />
<text x="1596.5" y="633.98" font-size="15" fill="#555555" textLength="162.5" lengthAdjust="spacingAndGlyphs" >Lake Union Cntr (1st Fl)</text>
<text x="1927.0" y="634.78" font-size="15" fill="#ffffff" font-weight="bold" textLength="40" lengthAdjust="spacingAndGlyphs" >1,991</text>
<rect x="1587" y="642.04" width="388" height="1.5" fill="#e6e6e6" />
<rect x="1921" y="643.54" width="52" height="26.26" fill="#4a9257" />
<text x="1596.5" y="661.74" font-size="15" fill="#555555" textLength="126.5" lengthAdjust="spacingAndGlyphs" >Lake View (2nd Fl)</text>
<text x="1927.0" y="662.54" font-size="15" fill="#ffffff" font-weight="bold" textLength="40" lengthAdjust="spacingAndGlyphs" >1,788</text>
<rect x="1587" y="669.8" width="388" height="1.5" fill="#e6e6e6" />
<rect x="1921" y="671.3" width="52" height="26.26" fill="#559d5e" />
<text x="1596.5" y="689.5" font-size="15" fill="#555555" textLength="92" lengthAdjust="spacingAndGlyphs" >Plaza (4th Fl)</text>
<text x="1927.0" y="690.3" font-size="15" fill="#ffffff" font-weight="bold" textLength="40" lengthAdjust="spacingAndGlyphs" >1,437</text>
<rect x="1587" y="697.56" width="388" height="1.5" fill="#e6e6e6" />
<rect x="1921" y="699.06" width="52" height="26.26" fill="#5ba262" />
<text x="1596.5" y="717.26" font-size="15" fill="#555555" textLength="162.5" lengthAdjust="spacingAndGlyphs" >West Dock Bldg (3rd Fl)</text>
<text x="1927.0" y="718.06" font-size="15" fill="#111111" font-weight="bold" textLength="40" lengthAdjust="spacingAndGlyphs" >1,374</text>
<rect x="1587" y="725.32" width="388" height="1.5" fill="#e6e6e6" />
<rect x="1921" y="726.82" width="52" height="26.26" fill="#63a965" />
<text x="1596.5" y="745.0200000000001" font-size="15" fill="#555555" textLength="94.5" lengthAdjust="spacingAndGlyphs" >Plaza (2nd Fl)</text>
<text x="1927.0" y="745.82" font-size="15" fill="#111111" font-weight="bold" textLength="40" lengthAdjust="spacingAndGlyphs" >1,271</text>
<rect x="1587" y="753.08" width="388" height="1.5" fill="#e6e6e6" />
<rect x="1921" y="754.58" width="52" height="26.26" fill="#70b56c" />
<text x="1596.5" y="772.7800000000001" font-size="15" fill="#555555" textLength="161.5" lengthAdjust="spacingAndGlyphs" >West Dock Bldg (1st Fl)</text>
<text x="1927.0" y="773.58" font-size="15" fill="#111111" font-weight="bold" textLength="40" lengthAdjust="spacingAndGlyphs" >1,013</text>
<rect x="1587" y="780.84" width="388" height="1.5" fill="#e6e6e6" />
<rect x="1921" y="782.34" width="52" height="26.26" fill="#71b66d" />
<text x="1596.5" y="800.5400000000001" font-size="15" fill="#555555" textLength="119" lengthAdjust="spacingAndGlyphs" >Blue Fin (11th Fl)</text>
<text x="1934.25" y="801.34" font-size="15" fill="#111111" font-weight="bold" textLength="25.5" lengthAdjust="spacingAndGlyphs" >974</text>
<rect x="1587" y="808.6" width="388" height="1.5" fill="#e6e6e6" />
<rect x="1921" y="810.1" width="52" height="26.26" fill="#76b970" />
<text x="1596.5" y="828.3000000000001" font-size="15" fill="#555555" textLength="103.5" lengthAdjust="spacingAndGlyphs" >Remote - USCA</text>
<text x="1934.25" y="829.1" font-size="15" fill="#111111" font-weight="bold" textLength="25.5" lengthAdjust="spacingAndGlyphs" >912</text>
<rect x="1587" y="836.36" width="388" height="1.5" fill="#e6e6e6" />
<rect x="1921" y="837.86" width="52" height="26.26" fill="#7abc73" />
<text x="1596.5" y="856.0600000000001" font-size="15" fill="#555555" textLength="110" lengthAdjust="spacingAndGlyphs" >Blue Fin (5th Fl)</text>
<text x="1934.25" y="856.86" font-size="15" fill="#111111" font-weight="bold" textLength="25.5" lengthAdjust="spacingAndGlyphs" >854</text>
<rect x="1587" y="864.12" width="388" height="1.5" fill="#e6e6e6" />
<rect x="1921" y="865.62" width="52" height="26.26" fill="#7cbe75" />
<text x="1596.5" y="883.82" font-size="15" fill="#555555" textLength="111.5" lengthAdjust="spacingAndGlyphs" >Kirkland (1st Fl)</text>
<text x="1934.25" y="884.62" font-size="15" fill="#111111" font-weight="bold" textLength="25.5" lengthAdjust="spacingAndGlyphs" >784</text>
<rect x="1587" y="891.88" width="388" height="1.5" fill="#e6e6e6" />
<rect x="1921" y="893.38" width="52" height="26.26" fill="#80c178" />
<text x="1596.5" y="911.58" font-size="15" fill="#555555" textLength="172.5" lengthAdjust="spacingAndGlyphs" >Lake View (2nd Fl Annex)</text>
<text x="1934.25" y="912.38" font-size="15" fill="#111111" font-weight="bold" textLength="25.5" lengthAdjust="spacingAndGlyphs" >751</text>
<rect x="1587" y="919.6400000000001" width="388" height="1.5" fill="#e6e6e6" />
<rect x="1921" y="921.1400000000001" width="52" height="26.26" fill="#82c27a" />
<text x="1596.5" y="939.3400000000001" font-size="15" fill="#555555" textLength="91" lengthAdjust="spacingAndGlyphs" >Plaza (1st Fl)</text>
<text x="1934.25" y="940.1400000000001" font-size="15" fill="#111111" font-weight="bold" textLength="25.5" lengthAdjust="spacingAndGlyphs" >697</text>
</g>
<rect x="1976" y="531" width="20" height="400" fill="#f2f2f2" />
<rect x="1976" y="531.5" width="20" height="140" fill="#dadada" />
<rect x="0" y="931.8" width="250" height="1" fill="#efefef" />
<rect x="836" y="931.8" width="891" height="1" fill="#efefef" />
<text x="8.5" y="946.5" font-size="15" fill="#555555" textLength="70" lengthAdjust="spacingAndGlyphs" >Hardware</text>
<rect x="251.5" y="933.3" width="81.69999999999999" height="16.300000000000068" fill="#3a7a4f" />
<rect x="335" y="933.3" width="81.5" height="16.300000000000068" fill="#3b7c50" />
<rect x="418.3" y="933.3" width="81.5" height="16.300000000000068" fill="#3e8152" />
<rect x="501.6" y="933.3" width="80.89999999999998" height="16.300000000000068" fill="#408453" />
<rect x="584.5" y="933.3" width="81.29999999999995" height="16.300000000000068" fill="#4a9257" />
<rect x="667.5" y="933.3" width="80.79999999999995" height="16.300000000000068" fill="#4f975b" />
<rect x="750" y="933.3" width="82" height="16.300000000000068" fill="#3a7a4f" />
<rect x="836" y="933.3" width="792.5999999999999" height="16.300000000000068" fill="#3a7a4f" />
<rect x="0" y="950.2" width="250" height="1" fill="#efefef" />
<rect x="836" y="950.2" width="891" height="1" fill="#efefef" />
<text x="8.5" y="964.9000000000001" font-size="15" fill="#555555" textLength="122.5" lengthAdjust="spacingAndGlyphs" >Can We Help You?</text>
<rect x="251.5" y="951.7" width="81.69999999999999" height="17.09999999999991" fill="#529a5e" />
<rect x="335" y="951.7" width="81.5" height="17.09999999999991" fill="#4d955a" />
<rect x="418.3" y="951.7" width="81.5" height="17.09999999999991" fill="#559d60" />
<rect x="501.6" y="951.7" width="80.89999999999998" height="17.09999999999991" fill="#569e60" />
<rect x="584.5" y="951.7" width="81.29999999999995" height="17.09999999999991" fill="#62a863" />
<rect x="667.5" y="951.7" width="80.79999999999995" height="17.09999999999991" fill="#6cb068" />
<rect x="750" y="951.7" width="82" height="17.09999999999991" fill="#4f975b" />
<rect x="836" y="951.7" width="604" height="17.09999999999991" fill="#4f975b" />
<rect x="0" y="969.7" width="250" height="1" fill="#efefef" />
<rect x="836" y="969.7" width="891" height="1" fill="#efefef" />
<text x="8.5" y="984.4000000000001" font-size="15" fill="#555555" textLength="66" lengthAdjust="spacingAndGlyphs" >Software</text>
<rect x="251.5" y="971.2" width="81.69999999999999" height="16.0" fill="#4e975b" />
<rect x="335" y="971.2" width="81.5" height="16.0" fill="#5ba262" />
<rect x="418.3" y="971.2" width="81.5" height="16.0" fill="#62a864" />
<rect x="501.6" y="971.2" width="80.89999999999998" height="16.0" fill="#66ab66" />
<rect x="584.5" y="971.2" width="81.29999999999995" height="16.0" fill="#6aae68" />
<rect x="667.5" y="971.2" width="80.79999999999995" height="16.0" fill="#6cb068" />
<rect x="750" y="971.2" width="82" height="16.0" fill="#5aa162" />
<rect x="836" y="971.2" width="534.5999999999999" height="16.0" fill="#5aa162" />
<rect x="0" y="987.6" width="250" height="1" fill="#efefef" />
<rect x="836" y="987.6" width="891" height="1" fill="#efefef" />
<text x="8.5" y="1002.3000000000001" font-size="15" fill="#555555" textLength="29" lengthAdjust="spacingAndGlyphs" >Null</text>
<rect x="251.5" y="989.1" width="81.69999999999999" height="16.299999999999955" fill="#6cb068" />
<rect x="335" y="989.1" width="81.5" height="16.299999999999955" fill="#66ab66" />
<rect x="418.3" y="989.1" width="81.5" height="16.299999999999955" fill="#6aae67" />
<rect x="501.6" y="989.1" width="80.89999999999998" height="16.299999999999955" fill="#6cb068" />
<rect x="584.5" y="989.1" width="81.29999999999995" height="16.299999999999955" fill="#70b36b" />
<rect x="667.5" y="989.1" width="80.79999999999995" height="16.299999999999955" fill="#76b870" />
<rect x="750" y="989.1" width="82" height="16.299999999999955" fill="#6cb068" />
<rect x="836" y="989.1" width="445.79999999999995" height="16.299999999999955" fill="#6aae67" />
<rect x="0" y="1005.8" width="250" height="1" fill="#efefef" />
<rect x="836" y="1005.8" width="891" height="1" fill="#efefef" />
<text x="8.5" y="1020.5" font-size="15" fill="#555555" textLength="139.5" lengthAdjust="spacingAndGlyphs" >Furniture and Decor</text>
<rect x="251.5" y="1007.3" width="81.69999999999999" height="16.200000000000045" fill="#66ab66" />
<rect x="335" y="1007.3" width="81.5" height="16.200000000000045" fill="#6aae68" />
<rect x="418.3" y="1007.3" width="81.5" height="16.200000000000045" fill="#70b36b" />
<rect x="501.6" y="1007.3" width="80.89999999999998" height="16.200000000000045" fill="#6cb068" />
<rect x="584.5" y="1007.3" width="81.29999999999995" height="16.200000000000045" fill="#78b972" />
<rect x="667.5" y="1007.3" width="80.79999999999995" height="16.200000000000045" fill="#7dbd75" />
<rect x="750" y="1007.3" width="82" height="16.200000000000045" fill="#6aae68" />
<rect x="836" y="1007.3" width="426.5" height="16.200000000000045" fill="#70b36b" />
<rect x="0" y="1023.8" width="250" height="1" fill="#efefef" />
<rect x="836" y="1023.8" width="891" height="1" fill="#efefef" />
<text x="8.5" y="1038.5" font-size="15" fill="#555555" textLength="43" lengthAdjust="spacingAndGlyphs" >Office</text>
<rect x="251.5" y="1025.3" width="81.69999999999999" height="17.40000000000009" fill="#78b972" />
<rect x="335" y="1025.3" width="81.5" height="17.40000000000009" fill="#76b870" />
<rect x="418.3" y="1025.3" width="81.5" height="17.40000000000009" fill="#7dbd75" />
<rect x="501.6" y="1025.3" width="80.89999999999998" height="17.40000000000009" fill="#7bbb73" />
<rect x="584.5" y="1025.3" width="81.29999999999995" height="17.40000000000009" fill="#85c27b" />
<rect x="667.5" y="1025.3" width="80.79999999999995" height="17.40000000000009" fill="#8ac67e" />
<rect x="750" y="1025.3" width="82" height="17.40000000000009" fill="#6eb26a" />
<rect x="836" y="1025.3" width="354.29999999999995" height="17.40000000000009" fill="#7bbb73" />
<rect x="0" y="1043.1" width="250" height="1" fill="#efefef" />
<rect x="836" y="1043.1" width="891" height="1" fill="#efefef" />
<text x="8.5" y="1057.8" font-size="15" fill="#555555" textLength="139" lengthAdjust="spacingAndGlyphs" >Security and Access</text>
<rect x="251.5" y="1044.6" width="81.69999999999999" height="16.600000000000136" fill="#80bf77" />
<rect x="335" y="1044.6" width="81.5" height="16.600000000000136" fill="#8ac67e" />
<rect x="418.3" y="1044.6" width="81.5" height="16.600000000000136" fill="#8fc982" />
<rect x="501.6" y="1044.6" width="80.89999999999998" height="16.600000000000136" fill="#8ac67e" />
<rect x="584.5" y="1044.6" width="81.29999999999995" height="16.600000000000136" fill="#97cd87" />
<rect x="667.5" y="1044.6" width="80.79999999999995" height="16.600000000000136" fill="#97cd87" />
<rect x="750" y="1044.6" width="82" height="16.600000000000136" fill="#87c47c" />
<rect x="836" y="1044.6" width="266.9000000000001" height="16.600000000000136" fill="#8ac67e" />
<rect x="0" y="1061.3" width="250" height="1" fill="#efefef" />
<rect x="836" y="1061.3" width="891" height="1" fill="#efefef" />
<text x="8.5" y="1076.0" font-size="15" fill="#555555" textLength="58" lengthAdjust="spacingAndGlyphs" >Printers</text>
<rect x="251.5" y="1062.8" width="81.69999999999999" height="16.299999999999955" fill="#87c47c" />
<rect x="335" y="1062.8" width="81.5" height="16.299999999999955" fill="#8fc982" />
<rect x="418.3" y="1062.8" width="81.5" height="16.299999999999955" fill="#8ac67e" />
<rect x="501.6" y="1062.8" width="80.89999999999998" height="16.299999999999955" fill="#8ac67e" />
<rect x="584.5" y="1062.8" width="81.29999999999995" height="16.299999999999955" fill="#93cb85" />
<rect x="667.5" y="1062.8" width="80.79999999999995" height="16.299999999999955" fill="#97cd87" />
<rect x="750" y="1062.8" width="82" height="16.299999999999955" fill="#8dc780" />
<rect x="836" y="1062.8" width="255.4000000000001" height="16.299999999999955" fill="#8dc780" />
<rect x="0" y="1079.1" width="250" height="1" fill="#efefef" />
<rect x="836" y="1079.1" width="891" height="1" fill="#efefef" />
<text x="8.5" y="1093.8" font-size="15" fill="#555555" textLength="68" lengthAdjust="spacingAndGlyphs" >Janitorial</text>
<rect x="251.5" y="1080.6" width="81.69999999999999" height="17.5" fill="#93cb85" />
<rect x="335" y="1080.6" width="81.5" height="17.5" fill="#99ce89" />
<rect x="418.3" y="1080.6" width="81.5" height="17.5" fill="#a0d28d" />
<rect x="501.6" y="1080.6" width="80.89999999999998" height="17.5" fill="#99ce89" />
<rect x="584.5" y="1080.6" width="81.29999999999995" height="17.5" fill="#9dd08b" />
<rect x="667.5" y="1080.6" width="80.79999999999995" height="17.5" fill="#a3d490" />
<rect x="750" y="1080.6" width="82" height="17.5" fill="#97cd87" />
<rect x="836" y="1080.6" width="181.79999999999995" height="17.5" fill="#99ce89" />
<rect x="0" y="1098.7" width="250" height="1" fill="#efefef" />
<rect x="836" y="1098.7" width="891" height="1" fill="#efefef" />
<text x="8.5" y="1113.4" font-size="15" fill="#555555" textLength="51.5" lengthAdjust="spacingAndGlyphs" >Tablets</text>
<rect x="251.5" y="1100.2" width="81.69999999999999" height="16.09999999999991" fill="#99ce89" />
<rect x="335" y="1100.2" width="81.5" height="16.09999999999991" fill="#99ce89" />
<rect x="418.3" y="1100.2" width="81.5" height="16.09999999999991" fill="#9dd08b" />
<rect x="501.6" y="1100.2" width="80.89999999999998" height="16.09999999999991" fill="#99ce89" />
<rect x="584.5" y="1100.2" width="81.29999999999995" height="16.09999999999991" fill="#a0d28d" />
<rect x="667.5" y="1100.2" width="80.79999999999995" height="16.09999999999991" fill="#a5d591" />
<rect x="750" y="1100.2" width="82" height="16.09999999999991" fill="#99ce89" />
<rect x="836" y="1100.2" width="176.29999999999995" height="16.09999999999991" fill="#9dd08b" />
<rect x="0" y="1116.6" width="250" height="1" fill="#efefef" />
<rect x="836" y="1116.6" width="891" height="1" fill="#efefef" />
<text x="8.5" y="1131.3" font-size="15" fill="#555555" textLength="59.5" lengthAdjust="spacingAndGlyphs" >Services</text>
<rect x="251.5" y="1118.1" width="81.69999999999999" height="16.40000000000009" fill="#99ce89" />
<rect x="335" y="1118.1" width="81.5" height="16.40000000000009" fill="#99ce89" />
<rect x="418.3" y="1118.1" width="81.5" height="16.40000000000009" fill="#99ce89" />
<rect x="501.6" y="1118.1" width="80.89999999999998" height="16.40000000000009" fill="#9dd08b" />
<rect x="584.5" y="1118.1" width="81.29999999999995" height="16.40000000000009" fill="#a3d490" />
<rect x="667.5" y="1118.1" width="80.79999999999995" height="16.40000000000009" fill="#9dd08b" />
<rect x="750" y="1118.1" width="82" height="16.40000000000009" fill="#99ce89" />
<rect x="836" y="1118.1" width="173.5" height="16.40000000000009" fill="#9dd08b" />
<rect x="0" y="1134.8" width="250" height="1" fill="#efefef" />
<rect x="836" y="1134.8" width="891" height="1" fill="#efefef" />
<text x="8.5" y="1149.5" font-size="15" fill="#555555" textLength="56" lengthAdjust="spacingAndGlyphs" >Mobiles</text>
<rect x="251.5" y="1136.3" width="81.69999999999999" height="17.5" fill="#99ce89" />
<rect x="335" y="1136.3" width="81.5" height="17.5" fill="#9dd08b" />
<rect x="418.3" y="1136.3" width="81.5" height="17.5" fill="#99ce89" />
<rect x="501.6" y="1136.3" width="80.89999999999998" height="17.5" fill="#97cd87" />
<rect x="584.5" y="1136.3" width="81.29999999999995" height="17.5" fill="#a3d490" />
<rect x="667.5" y="1136.3" width="80.79999999999995" height="17.5" fill="#a7d692" />
<rect x="750" y="1136.3" width="82" height="17.5" fill="#97cd87" />
<rect x="836" y="1136.3" width="170.79999999999995" height="17.5" fill="#9dd08b" />
<rect x="0" y="1154.5" width="250" height="1" fill="#efefef" />
<rect x="836" y="1154.5" width="891" height="1" fill="#efefef" />
<text x="8.5" y="1169.2" font-size="15" fill="#555555" textLength="79" lengthAdjust="spacingAndGlyphs" >Quick Links</text>
<rect x="251.5" y="1156" width="81.69999999999999" height="15.900000000000091" fill="#99ce89" />
<rect x="335" y="1156" width="81.5" height="15.900000000000091" fill="#9dd08b" />
<rect x="418.3" y="1156" width="81.5" height="15.900000000000091" fill="#9dd08b" />
<rect x="501.6" y="1156" width="80.89999999999998" height="15.900000000000091" fill="#97cd87" />
<rect x="584.5" y="1156" width="81.29999999999995" height="15.900000000000091" fill="#a3d490" />
<rect x="667.5" y="1156" width="80.79999999999995" height="15.900000000000091" fill="#a5d591" />
<rect x="750" y="1156" width="82" height="15.900000000000091" fill="#99ce89" />
<rect x="836" y="1156" width="168" height="15.900000000000091" fill="#9dd08b" />
<rect x="0" y="1172.7" width="250" height="1" fill="#efefef" />
<rect x="836" y="1172.7" width="891" height="1" fill="#efefef" />
<text x="8.5" y="1187.4" font-size="15" fill="#555555" textLength="63.5" lengthAdjust="spacingAndGlyphs" >Facilities</text>
<rect x="251.5" y="1174.2" width="81.69999999999999" height="15.599999999999909" fill="#97cd87" />
<rect x="335" y="1174.2" width="81.5" height="15.599999999999909" fill="#9dd08b" />
<rect x="418.3" y="1174.2" width="81.5" height="15.599999999999909" fill="#99ce89" />
<rect x="501.6" y="1174.2" width="80.89999999999998" height="15.599999999999909" fill="#a0d28d" />
<rect x="584.5" y="1174.2" width="81.29999999999995" height="15.599999999999909" fill="#a3d490" />
<rect x="667.5" y="1174.2" width="80.79999999999995" height="15.599999999999909" fill="#a0d28d" />
<rect x="750" y="1174.2" width="82" height="15.599999999999909" fill="#97cd87" />
<rect x="836" y="1174.2" width="168" height="15.599999999999909" fill="#9dd08b" />
<rect x="0" y="1190.5" width="250" height="1" fill="#efefef" />
<rect x="836" y="1190.5" width="891" height="1" fill="#efefef" />
<text x="8.5" y="1205.2" font-size="15" fill="#555555" textLength="111" lengthAdjust="spacingAndGlyphs" >Role Delegation</text>
<rect x="251.5" y="1192" width="81.69999999999999" height="16" fill="#97cd87" />
<rect x="335" y="1192" width="81.5" height="16" fill="#a3d490" />
<rect x="418.3" y="1192" width="81.5" height="16" fill="#a0d28d" />
<rect x="501.6" y="1192" width="80.89999999999998" height="16" fill="#a3d490" />
<rect x="584.5" y="1192" width="81.29999999999995" height="16" fill="#a0d28d" />
<rect x="667.5" y="1192" width="80.79999999999995" height="16" fill="#a3d490" />
<rect x="750" y="1192" width="82" height="16" fill="#97cd87" />
<rect x="836" y="1192" width="161" height="16" fill="#a0d28d" />
<rect x="0" y="1208.6" width="250" height="1" fill="#efefef" />
<rect x="836" y="1208.6" width="891" height="1" fill="#efefef" />
<text x="8.5" y="1223.3" font-size="15" fill="#555555" textLength="169.5" lengthAdjust="spacingAndGlyphs" >Maintenance and Repair</text>
<rect x="251.5" y="1210.1" width="81.69999999999999" height="17.300000000000182" fill="#b3dea2" />
<rect x="335" y="1210.1" width="81.5" height="17.300000000000182" fill="#b6e0a5" />
<rect x="418.3" y="1210.1" width="81.5" height="17.300000000000182" fill="#b3dea2" />
<rect x="501.6" y="1210.1" width="80.89999999999998" height="17.300000000000182" fill="#b6e0a5" />
<rect x="584.5" y="1210.1" width="81.29999999999995" height="17.300000000000182" fill="#b6e0a5" />
<rect x="667.5" y="1210.1" width="80.79999999999995" height="17.300000000000182" fill="#bce3ab" />
<rect x="750" y="1210.1" width="82" height="17.300000000000182" fill="#b3dea2" />
<rect x="836" y="1210.1" width="89.79999999999995" height="17.300000000000182" fill="#bce3ab" />
<rect x="0" y="1227.5" width="250" height="1" fill="#efefef" />
<rect x="836" y="1227.5" width="891" height="1" fill="#efefef" />
<text x="8.5" y="1242.2" font-size="15" fill="#555555" textLength="46" lengthAdjust="spacingAndGlyphs" >Moves</text>
<rect x="251.5" y="1229" width="81.69999999999999" height="16.90000000000009" fill="#afdc9e" />
<rect x="335" y="1229" width="81.5" height="16.90000000000009" fill="#b3dea2" />
<rect x="418.3" y="1229" width="81.5" height="16.90000000000009" fill="#a9d897" />
<rect x="501.6" y="1229" width="80.89999999999998" height="16.90000000000009" fill="#bce3ab" />
<rect x="584.5" y="1229" width="81.29999999999995" height="16.90000000000009" fill="#b9e1a8" />
<rect x="667.5" y="1229" width="80.79999999999995" height="16.90000000000009" fill="#bce3ab" />
<rect x="750" y="1229" width="82" height="16.90000000000009" fill="#afdc9e" />
<rect x="836" y="1229" width="88.89999999999998" height="16.90000000000009" fill="#bce3ab" />
<rect x="0" y="1246" width="250" height="1" fill="#efefef" />
<rect x="836" y="1246" width="891" height="1" fill="#efefef" />
<rect x="833" y="931" width="2.5" height="317" fill="#eeeeee" />
<line x1="1134.2" y1="933" x2="1134.2" y2="1246" stroke="#555555" stroke-width="1" stroke-dasharray="3 2" opacity="0.7"/>
<text x="1634.5" y="954.5" font-size="16.5" fill="#4a4a4a" font-weight="bold" textLength="45.5" lengthAdjust="spacingAndGlyphs" >4,122</text>
<text x="1017" y="1113.2" font-size="16.5" fill="#4a4a4a" font-weight="bold" textLength="31.5" lengthAdjust="spacingAndGlyphs" >919</text>
<text x="1011.5" y="1149" font-size="16.5" fill="#4a4a4a" font-weight="bold" textLength="31.5" lengthAdjust="spacingAndGlyphs" >890</text>
<text x="1009" y="1186.8" font-size="16.5" fill="#4a4a4a" font-weight="bold" textLength="31.5" lengthAdjust="spacingAndGlyphs" >878</text>
<text x="929.5" y="1238.3" font-size="16.5" fill="#4a4a4a" font-weight="bold" textLength="31.5" lengthAdjust="spacingAndGlyphs" >468</text>
<rect x="1733" y="938" width="264" height="41" fill="#f0f0f0" />
<text x="1743" y="966" font-size="17.5" fill="#333333" textLength="132" lengthAdjust="spacingAndGlyphs" >Requested Items</text>
<rect x="1881" y="951" width="1.5" height="18" fill="#333333" />
<text x="1889" y="966" font-size="15.5" fill="#333333" textLength="78" lengthAdjust="spacingAndGlyphs" >by Number</text>
<defs><clipPath id="riclip"><rect x="1733" y="982" width="246" height="244"/></clipPath></defs>
<g clip-path="url(#riclip)">
<rect x="1733" y="983.5" width="246" height="1.5" fill="#e6e6e6" />
<text x="1742.5" y="1005.8" font-size="15" fill="#555555" textLength="164" lengthAdjust="spacingAndGlyphs" >Apple MacBook Pro 15”</text>
<rect x="1733" y="1015.45" width="246" height="1.5" fill="#e6e6e6" />
<text x="1742.5" y="1037.75" font-size="15" fill="#555555" textLength="94" lengthAdjust="spacingAndGlyphs" >Asus G Series</text>
<rect x="1733" y="1047.4" width="246" height="1.5" fill="#e6e6e6" />
<text x="1742.5" y="1069.7" font-size="15" fill="#555555" textLength="191.5" lengthAdjust="spacingAndGlyphs" >Notebook Computer Loaner</text>
<rect x="1733" y="1079.35" width="246" height="1.5" fill="#e6e6e6" />
<text x="1742.5" y="1101.6499999999999" font-size="15" fill="#555555" textLength="110.5" lengthAdjust="spacingAndGlyphs" >Carpet Cleaning</text>
<rect x="1733" y="1111.3" width="246" height="1.5" fill="#e6e6e6" />
<text x="1742.5" y="1133.6" font-size="15" fill="#555555" textLength="86.5" lengthAdjust="spacingAndGlyphs" >Apple iPad 3</text>
<rect x="1733" y="1143.25" width="246" height="1.5" fill="#e6e6e6" />
<text x="1742.5" y="1165.55" font-size="15" fill="#555555" textLength="98" lengthAdjust="spacingAndGlyphs" >Dreamweaver</text>
<rect x="1733" y="1175.2" width="246" height="1.5" fill="#e6e6e6" />
<text x="1742.5" y="1197.5" font-size="15" fill="#555555" textLength="55.5" lengthAdjust="spacingAndGlyphs" >Acrobat</text>
<rect x="1733" y="1207.15" width="246" height="1.5" fill="#e6e6e6" />
<text x="1742.5" y="1229.45" font-size="15" fill="#555555" textLength="85" lengthAdjust="spacingAndGlyphs" >User Facade</text>
</g>
<rect x="1979" y="984" width="18" height="243" fill="#f0f0f0" />
<rect x="1979" y="984" width="18" height="30.5" fill="#dcdcdc" />
<rect x="1733" y="1227" width="246" height="20" fill="#f0f0f0" />
<rect x="1733" y="1227" width="143" height="20" fill="#dcdcdc" />
</svg>
</body></html>
